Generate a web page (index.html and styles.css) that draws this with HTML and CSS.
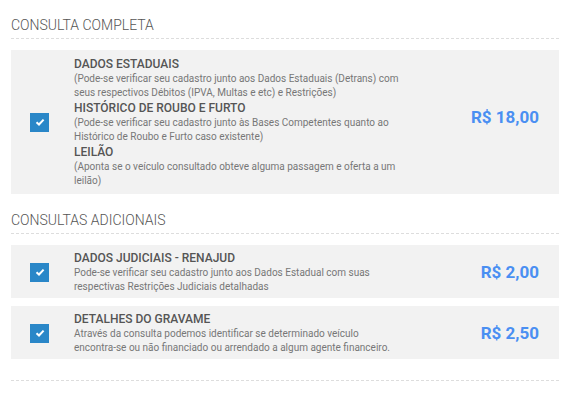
FILE: index.html
```html
<!DOCTYPE html>
<html lang="pt-BR">
<head>
    <meta charset="UTF-8">
    <meta name="viewport" content="width=device-width, initial-scale=1.0">
    <title>Consulta</title>
    <link rel="stylesheet" href="styles.css">
</head>
<body>
    <main class="consultas">
        <h2 class="section-title">CONSULTA COMPLETA</h2>
        <div class="item item-full">
            <div class="check">
                <span class="checkbox"><svg width="10" height="8" viewBox="0 0 10 8"><path d="M1.5 4.2 L4 6.5 L8.6 1.6" fill="none" stroke="#fff" stroke-width="2"/></svg></span>
            </div>
            <div class="info">
                <h3>DADOS ESTADUAIS</h3>
                <p>(Pode-se verificar seu cadastro junto aos Dados Estaduais (Detrans) com<br>seus respectivos Débitos (IPVA, Multas e etc) e Restrições)</p>
                <h3>HISTÓRICO DE ROUBO E FURTO</h3>
                <p>(Pode-se verificar seu cadastro junto às Bases Competentes quanto ao<br>Histórico de Roubo e Furto caso existente)</p>
                <h3>LEILÃO</h3>
                <p>(Aponta se o veículo consultado obteve alguma passagem e oferta a um<br>leilão)</p>
            </div>
            <div class="price price-full">R$ 18,00</div>
        </div>

        <h2 class="section-title second">CONSULTAS ADICIONAIS</h2>
        <div class="item">
            <div class="check">
                <span class="checkbox"><svg width="10" height="8" viewBox="0 0 10 8"><path d="M1.5 4.2 L4 6.5 L8.6 1.6" fill="none" stroke="#fff" stroke-width="2"/></svg></span>
            </div>
            <div class="info">
                <h3>DADOS JUDICIAIS - RENAJUD</h3>
                <p>Pode-se verificar seu cadastro junto aos Dados Estadual com suas<br>respectivas Restrições Judiciais detalhadas</p>
            </div>
            <div class="price">R$ 2,00</div>
        </div>
        <div class="item">
            <div class="check">
                <span class="checkbox"><svg width="10" height="8" viewBox="0 0 10 8"><path d="M1.5 4.2 L4 6.5 L8.6 1.6" fill="none" stroke="#fff" stroke-width="2"/></svg></span>
            </div>
            <div class="info">
                <h3>DETALHES DO GRAVAME</h3>
                <p>Através da consulta podemos identificar se determinado veículo<br>encontra-se ou não financiado ou arrendado a algum agente financeiro.</p>
            </div>
            <div class="price">R$ 2,50</div>
        </div>
        <div class="divider"></div>
    </main>
</body>
</html>
```

FILE: styles.css
```css
body {
    margin: 0;
    background-color: #ffffff;
    font-family: Roboto, "Noto Sans", sans-serif;
    color: #555;
}
.consultas {
    padding: 15px 8px 0 11px;
}
.section-title {
    margin: 0 0 11px 0;
    padding-bottom: 3px;
    font-size: 14px;
    line-height: 20px;
    font-weight: 300;
    color: #555;
    border-bottom: 1px dashed #dddddd;
}
.section-title.second {
    margin-top: 16px;
}
.item {
    display: flex;
    align-items: center;
    background-color: #f2f2f2;
    padding: 5px 0 4px 0;
    margin-bottom: 8px;
}
.item-full {
    padding: 6px 0 6px 0;
}
.check {
    width: 63px;
    flex-shrink: 0;
    padding-left: 19px;
    box-sizing: border-box;
}
.checkbox {
    display: flex;
    align-items: center;
    justify-content: center;
    width: 19px;
    height: 19px;
    background-color: #2a87c8;
}
.info {
    flex: 1;
}
.info h3 {
    margin: 0;
    font-size: 12px;
    line-height: 16px;
    font-weight: 500;
    color: #555;
}
.info p {
    margin: 0;
    font-size: 10px;
    line-height: 14px;
    color: #777;
}
.price {
    padding-right: 20px;
    font-size: 17px;
    font-weight: bold;
    color: #4a8ff2;
}
.price-full {
    margin-bottom: 10px;
}
.divider {
    margin-top: 21px;
    border-bottom: 1px dashed #dddddd;
}
```
